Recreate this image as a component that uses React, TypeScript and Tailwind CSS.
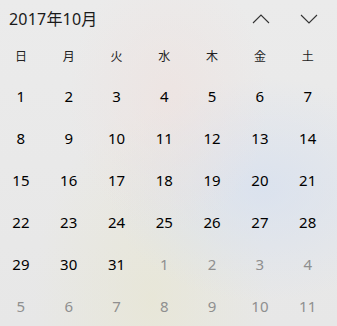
const weekdays = ["日", "月", "火", "水", "木", "金", "土"];

type Day = { n: number; cur: boolean };

function buildDays(): Day[] {
  const days: Day[] = [];
  for (let i = 1; i <= 31; i++) days.push({ n: i, cur: true });
  let next = 1;
  while (days.length < 42) days.push({ n: next++, cur: false });
  return days;
}

function Chevron({ up }: { up?: boolean }) {
  return (
    <svg width="18" height="10" viewBox="0 0 18 10" fill="none">
      <path
        d={up ? "M1 9 L9 1 L17 9" : "M1 1 L9 9 L17 1"}
        stroke="#333"
        strokeWidth="1.1"
      />
    </svg>
  );
}

export default function App() {
  const days = buildDays();
  return (
    <div
      className="w-[337px] h-[326px] overflow-hidden bg-[radial-gradient(ellipse_at_50%_30%,rgba(240,224,220,0.55),transparent_42%),radial-gradient(ellipse_at_78%_58%,rgba(214,224,240,0.75),transparent_42%),radial-gradient(ellipse_at_45%_92%,rgba(232,230,208,0.65),transparent_45%),linear-gradient(#ebebeb,#e7e7e7)] text-black"
      style={{ fontFamily: '"Noto Sans", "Noto Sans CJK JP", sans-serif' }}
    >
      <div className="flex items-center h-[38px] pl-[9px]">
        <span className="text-[16px] text-[#1a1a1a] tracking-[0.2px]">2017年10月</span>
        <div className="ml-auto flex mr-[4px]">
          <button className="w-[48px] h-[38px] flex items-center justify-center">
            <Chevron up />
          </button>
          <button className="w-[48px] h-[38px] flex items-center justify-center">
            <Chevron />
          </button>
        </div>
      </div>
      <div className="grid grid-cols-[repeat(7,47.8px)] -ml-[3px]">
        {weekdays.map((w) => (
          <div key={w} className="h-[37px] flex items-center justify-center text-[12px] text-[#222]">
            {w}
          </div>
        ))}
        {days.map((d, i) => (
          <div
            key={i}
            className={
              "h-[42px] flex items-center justify-center text-[15px] " +
              (d.cur ? "text-black" : "text-[#8f8f8f]")
            }
          >
            {d.n}
          </div>
        ))}
      </div>
    </div>
  );
}
